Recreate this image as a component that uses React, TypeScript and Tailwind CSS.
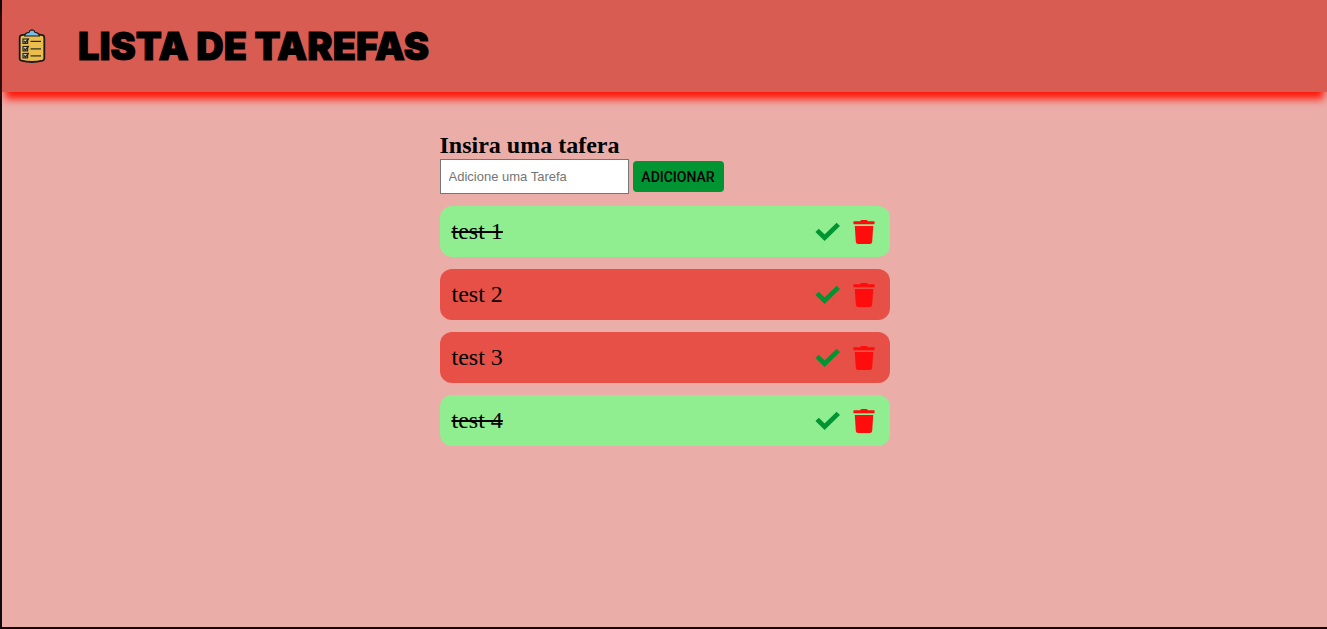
import { useState, type FormEvent } from "react";

type Task = { id: number; text: string; done: boolean };

const initialTasks: Task[] = [
  { id: 1, text: "test 1", done: true },
  { id: 2, text: "test 2", done: false },
  { id: 3, text: "test 3", done: false },
  { id: 4, text: "test 4", done: true },
];

function ClipboardIcon() {
  return (
    <svg viewBox="0 0 28 36" className="h-9 w-7" aria-hidden="true">
      <path
        d="M3.5 7.2 Q14 5.2 24.5 7.2 Q26.3 7.6 26.3 9.5 V30.5 Q26.3 32.2 24.5 32.7 Q14 35.3 3.5 32.7 Q1.7 32.2 1.7 30.5 V9.5 Q1.7 7.6 3.5 7.2Z"
        fill="#eabd4c"
        stroke="#1d1a16"
        strokeWidth="1.8"
      />
      <path
        d="M6.5 8 Q7 4.9 11 4.4 Q11.8 1.9 14 1.9 Q16.2 1.9 17 4.4 Q21 4.9 21.5 8Z"
        fill="#75bee9"
        stroke="#1d1a16"
        strokeWidth="1.1"
        strokeLinejoin="round"
      />
      {[11, 18.5, 25.5].map((y) => (
        <g key={y} fill="none" stroke="#292620" strokeWidth="1.2">
          <rect x="5" y={y} width="4.6" height="4.4" fill="#d8d3c2" />
          <path d={`M5.8 ${y + 1.8} l1.6 1.7 l3.4 -4`} strokeWidth="1.2" />
          <path d={`M12.5 ${y + 2.4} h10.5`} strokeWidth="1.2" />
        </g>
      ))}
    </svg>
  );
}

function CheckIcon() {
  return (
    <svg viewBox="0 0 24 24" className="size-6 overflow-visible" aria-hidden="true">
      <path d="M1.1 10.4 L8.6 17.7 L22.3 4.4" fill="none" stroke="#009432" strokeWidth="4.8" />
    </svg>
  );
}

function TrashIcon() {
  return (
    <svg viewBox="0 0 24 24" className="size-6" aria-hidden="true">
      <path
        d="M2 1.3 H8.3 L9 0 H15 L15.7 1.3 H22 Q22.6 1.3 22.6 2 V3.5 Q22.6 4.2 22 4.2 H2 Q1.4 4.2 1.4 3.5 V2 Q1.4 1.3 2 1.3Z M2.8 6 H21.2 L20.2 21.8 Q20 24 17.8 24 H6.2 Q4 24 3.8 21.8Z"
        fill="#ff0d0d"
      />
    </svg>
  );
}

export default function App() {
  const [tasks, setTasks] = useState(initialTasks);
  const [text, setText] = useState("");

  function addTask(event: FormEvent) {
    event.preventDefault();
    if (!text.trim()) return;
    setTasks([...tasks, { id: Date.now(), text: text.trim(), done: false }]);
    setText("");
  }

  function toggleTask(id: number) {
    setTasks(tasks.map((t) => (t.id === id ? { ...t, done: !t.done } : t)));
  }

  return (
    <div className="min-h-screen border-b-2 border-l-2 border-[#0f0b0d] bg-[#ebada8] font-['Liberation_Serif',serif] text-black">
      <header className="flex h-[92px] items-center gap-8 bg-[#d85c52] px-4 shadow-[0_10px_8px_-3px_#ff1408]">
        <ClipboardIcon />
        <h1 className="whitespace-nowrap font-[Inter,sans-serif] text-[38px] leading-10 font-black uppercase [-webkit-text-stroke:1px_black]">
          Lista de tarefas
        </h1>
      </header>

      <main className="mx-auto w-full max-w-[450px] pt-10">
        <form onSubmit={addTask}>
          <label htmlFor="task" className="block text-2xl leading-[27px] font-bold">
            Insira uma tafera
          </label>
          <div className="flex items-center gap-1">
            <input
              id="task"
              type="text"
              value={text}
              onChange={(event) => setText(event.target.value)}
              placeholder="Adicione uma Tarefa"
              className="h-[35px] w-[189px] border border-[#767676] bg-white px-2 font-['Liberation_Sans',sans-serif] text-[13px] placeholder:text-[#757575]"
            />
            <button
              type="submit"
              className="h-[31px] w-[91px] rounded bg-[#009432] font-[Roboto,sans-serif] text-sm font-medium uppercase"
            >
              Adicionar
            </button>
          </div>
        </form>

        <ul className="mt-3 flex flex-col gap-3">
          {tasks.map((task) => (
            <li
              key={task.id}
              className={`flex h-[51px] items-center justify-between rounded-xl pr-3.5 pl-3 ${
                task.done ? "bg-[#90ee90]" : "bg-[#e75047]"
              }`}
            >
              <span className={`pb-0.5 text-2xl ${task.done ? "line-through" : ""}`}>{task.text}</span>
              <div className="flex items-center gap-3">
                <button type="button" aria-label="Concluir tarefa" onClick={() => toggleTask(task.id)}>
                  <CheckIcon />
                </button>
                <button
                  type="button"
                  aria-label="Excluir tarefa"
                  onClick={() => setTasks(tasks.filter((t) => t.id !== task.id))}
                >
                  <TrashIcon />
                </button>
              </div>
            </li>
          ))}
        </ul>
      </main>
    </div>
  );
}
